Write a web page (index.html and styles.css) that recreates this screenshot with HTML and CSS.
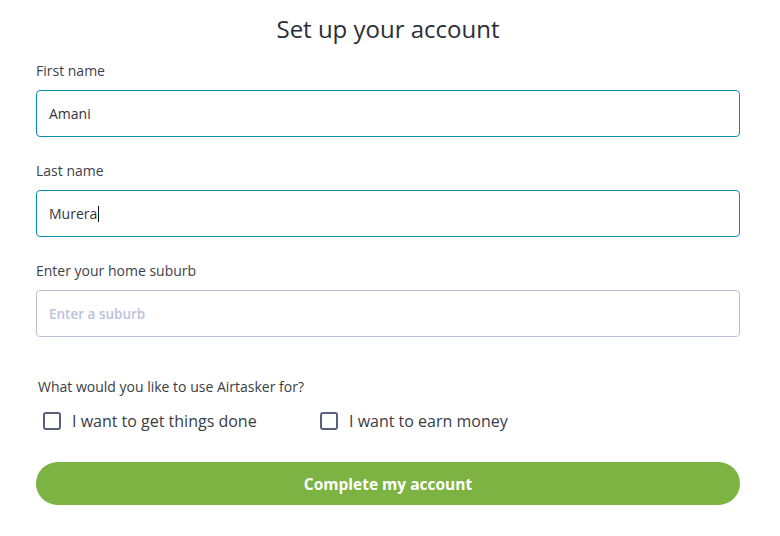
FILE: index.html
```html
<!DOCTYPE html>
<html lang="en">
<head>
<meta charset="utf-8">
<title>Set up your account</title>
<link rel="stylesheet" href="styles.css">
</head>
<body>
<main class="form">
  <h1 class="title">Set up your account</h1>

  <div class="field">
    <label class="label">First name</label>
    <div class="input input--active"><span class="value">Amani</span></div>
  </div>

  <div class="field">
    <label class="label">Last name</label>
    <div class="input input--active"><span class="value">Murera</span><span class="caret"></span></div>
  </div>

  <div class="field">
    <label class="label">Enter your home suburb</label>
    <div class="input"><span class="placeholder">Enter a suburb</span></div>
  </div>

  <p class="question">What would you like to use Airtasker for?</p>
  <div class="options">
    <label class="option option--first"><span class="box"></span><span>I want to get things done</span></label>
    <label class="option"><span class="box"></span><span>I want to earn money</span></label>
  </div>

  <button class="submit" type="button">Complete my account</button>
</main>
</body>
</html>
```
FILE: styles.css
```css
* { box-sizing: border-box; }
html, body { margin: 0; padding: 0; background: #fff; }
body {
  font-family: "Open Sans", "Noto Sans", sans-serif;
  color: #2c2e3a;
  width: 780px;
}
.form {
  width: 704px;
  margin-left: 36px;
  padding-top: 13px;
  display: flex;
  flex-direction: column;
}
.title {
  margin: 0;
  font-size: 24px;
  line-height: 31px;
  font-weight: 400;
  text-align: center;
  color: #2b2e38;
}
.field {
  margin-top: 17px;
  display: flex;
  flex-direction: column;
  gap: 9px;
}
.field + .field { margin-top: 24px; }
.label {
  font-size: 14px;
  line-height: 20px;
  color: #3d3f4a;
}
.input {
  height: 47px;
  border: 1px solid #b9c0dc;
  border-radius: 4px;
  padding: 0 12px;
  display: flex;
  align-items: center;
  font-size: 14px;
  color: #33353f;
}
.input--active { border-color: #0c8eb3; }
.caret {
  display: inline-block;
  width: 1px;
  height: 16px;
  background: #111;
  margin-left: 1px;
}
.placeholder { color: #bcc2dd; font-weight: 600; font-size: 13.5px; }
.question {
  margin: 40px 0 0 2px;
  font-size: 14px;
  line-height: 20px;
  color: #3a3c46;
}
.options {
  margin-top: 12px;
  padding-left: 7px;
  display: flex;
  align-items: center;
}
.option {
  display: flex;
  align-items: center;
  gap: 11px;
  font-size: 16px;
  line-height: 24px;
  color: #3a3c46;
}
.option--first { width: 277px; }
.box {
  width: 18px;
  height: 18px;
  border: 2px solid #5a5f7c;
  border-radius: 3px;
  flex: none;
}
.submit {
  margin-top: 29px;
  height: 43px;
  border: none;
  border-radius: 22px;
  background: #7db343;
  color: #fff;
  font-family: inherit;
  font-size: 15.5px;
  font-weight: 700;
  cursor: pointer;
}
```
